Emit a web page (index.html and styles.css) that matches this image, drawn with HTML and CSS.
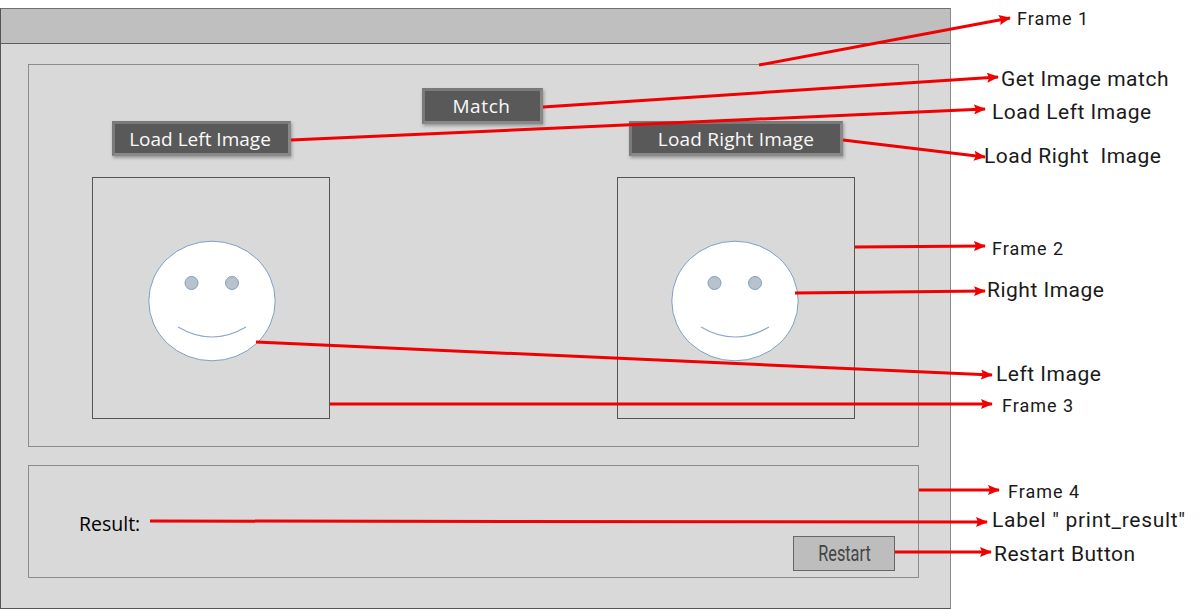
FILE: index.html
```html
<!DOCTYPE html>
<html lang="en">
<head>
<meta charset="utf-8">
<title>Image match layout</title>
<link rel="stylesheet" href="styles.css">
</head>
<body>
<div class="stage">
  <div class="window">
    <div class="titlebar"></div>
    <div class="window-body">
      <section class="frame frame-main">
        <div class="row-match"><button class="btn btn-match">Match</button></div>
        <div class="row-load">
          <button class="btn btn-left">Load Left Image</button>
          <button class="btn btn-right">Load Right Image</button>
        </div>
        <div class="row-images">
          <div class="image-box">
            <svg class="smiley" viewBox="0 0 128 122" width="128" height="122">
              <ellipse class="face" cx="64" cy="61" rx="63.2" ry="59.8"/>
              <circle class="eye" cx="43.5" cy="43" r="6.5"/>
              <circle class="eye" cx="84" cy="43" r="6.5"/>
              <path class="mouth" d="M30 87Q64 107 98 87"/>
            </svg>
          </div>
          <div class="image-box image-box-right">
            <svg class="smiley" viewBox="0 0 128 122" width="128" height="122">
              <ellipse class="face" cx="64" cy="61" rx="63.2" ry="59.8"/>
              <circle class="eye" cx="43.5" cy="43" r="6.5"/>
              <circle class="eye" cx="84" cy="43" r="6.5"/>
              <path class="mouth" d="M30 87Q64 107 98 87"/>
            </svg>
          </div>
        </div>
      </section>
      <section class="frame frame-result">
        <span class="result-label">Result:</span>
        <button class="btn-restart"><span class="restart-text">Restart</span></button>
      </section>
    </div>
  </div>

  <svg class="arrows" viewBox="0 0 1200 609" width="1200" height="609">
    <defs>
      <marker id="head" markerUnits="userSpaceOnUse" markerWidth="12" markerHeight="10" refX="11" refY="5" orient="auto">
        <path class="head" d="M0 0L12 5L0 10L2 5Z"/>
      </marker>
    </defs>
    <line class="arrow" x1="759" y1="65" x2="1010" y2="18"/>
    <line class="arrow" x1="543" y1="107" x2="998" y2="77"/>
    <line class="arrow" x1="291" y1="140" x2="985" y2="109"/>
    <line class="arrow" x1="843" y1="140" x2="985" y2="157"/>
    <line class="arrow" x1="855" y1="247" x2="985" y2="246"/>
    <line class="arrow" x1="795" y1="293" x2="985" y2="291"/>
    <line class="arrow" x1="256" y1="342" x2="992" y2="375"/>
    <line class="arrow" x1="330" y1="404" x2="992" y2="404"/>
    <line class="arrow" x1="919" y1="490" x2="999" y2="490"/>
    <line class="arrow" x1="150" y1="521" x2="987" y2="522"/>
    <line class="arrow" x1="895" y1="552" x2="991" y2="552"/>
  </svg>

  <span class="note note-sm n1">Frame 1</span>
  <span class="note n2">Get Image match</span>
  <span class="note n3">Load Left Image</span>
  <span class="note n4">Load Right&nbsp; Image</span>
  <span class="note note-sm n5">Frame 2</span>
  <span class="note n6">Right Image</span>
  <span class="note n7">Left Image</span>
  <span class="note note-sm n8">Frame 3</span>
  <span class="note note-sm n9">Frame 4</span>
  <span class="note n10">Label " print_result"</span>
  <span class="note n11">Restart Button</span>
</div>
</body>
</html>
```
FILE: styles.css
```css
* { box-sizing: border-box; }
html, body { margin: 0; padding: 0; background: #fff; }
.stage { position: relative; width: 1200px; height: 609px; overflow: hidden; padding-top: 8px; }

.window {
  width: 951px;
  height: 601px;
  background: #d9d9d9;
  border: 1px solid #6f6f6f;
  border-left-color: #555;
  border-right-color: #8a8a8a;
  border-bottom-color: #555;
  display: flex;
  flex-direction: column;
}
.titlebar { height: 35px; background: #bfbfbf; border-bottom: 1px solid #5f5f5f; flex: none; }
.window-body { padding: 20px 30px 0 27px; display: flex; flex-direction: column; gap: 18px; }

.frame { border: 1px solid #8c8c8c; width: 891px; }
.frame-main { height: 383px; padding-top: 23px; }
.frame-result { height: 113px; display: flex; justify-content: space-between; padding: 46px 23px 6px 50px; }

.row-match { padding-left: 393px; height: 36px; }
.row-load { display: flex; margin-top: -3px; padding-left: 83px; height: 36px; }
.row-images { display: flex; gap: 287px; padding-left: 63px; margin-top: 20px; }

.btn {
  display: block;
  padding: 0;
  background: #595959;
  color: #fafafa;
  border: 3px solid;
  border-color: #7a7a7a #888 #888 #7a7a7a;
  box-shadow: 1px 2px 3px rgba(90,90,90,.5);
  font-family: "Open Sans", sans-serif;
  font-size: 19px;
  text-align: center;
}
.btn-match { width: 121px; height: 36px; letter-spacing: .6px; padding-right: 2px; }
.btn-left { width: 179px; height: 35px; padding-right: 3px; }
.btn-right { width: 214px; height: 35px; margin-left: 338px; letter-spacing: .2px; }

.image-box {
  width: 238px;
  height: 242px;
  border: 1px solid #555;
  display: flex;
  padding: 62px 0 0 55px;
}
.image-box-right { padding-left: 53px; }
.smiley { display: block; flex: none; overflow: visible; }
.face { fill: #fff; stroke: #7e9fc4; stroke-width: 1; }
.eye { fill: #b8c2cc; stroke: #7e9fc4; stroke-width: 1; }
.mouth { fill: none; stroke: #8fa9c8; stroke-width: 1.2; }

.result-label { font-family: "Open Sans", sans-serif; font-size: 19.5px; color: #000; line-height: 24px; height: 24px; }
.btn-restart {
  width: 102px;
  height: 35px;
  align-self: flex-end;
  background: #bdbdbd;
  border: 1px solid #666;
  padding: 0;
  color: #444;
  font-family: "Roboto", sans-serif;
  font-size: 22px;
}
.restart-text { display: inline-block; transform: scaleX(.74); }

.arrows { position: absolute; left: 0; top: 0; pointer-events: none; }
.arrow { stroke: #f00000; stroke-width: 3; marker-end: url(#head); }
.head { fill: #f00000; }

.note {
  position: absolute;
  font-family: "Roboto", sans-serif;
  font-size: 21px;
  letter-spacing: .5px;
  line-height: 24px;
  color: #1a1a1a;
  white-space: nowrap;
}
.note-sm { font-size: 18px; letter-spacing: 1px; }
.n1 { left: 1017px; top: 7px; }
.n2 { left: 1001px; top: 67px; }
.n3 { left: 992px; top: 100px; }
.n4 { left: 984px; top: 144px; }
.n5 { left: 992px; top: 237px; }
.n6 { left: 987px; top: 278px; }
.n7 { left: 996px; top: 362px; }
.n8 { left: 1002px; top: 394px; }
.n9 { left: 1008px; top: 480px; }
.n10 { left: 992px; top: 508px; letter-spacing: .7px; }
.n11 { left: 994px; top: 542px; }
```
